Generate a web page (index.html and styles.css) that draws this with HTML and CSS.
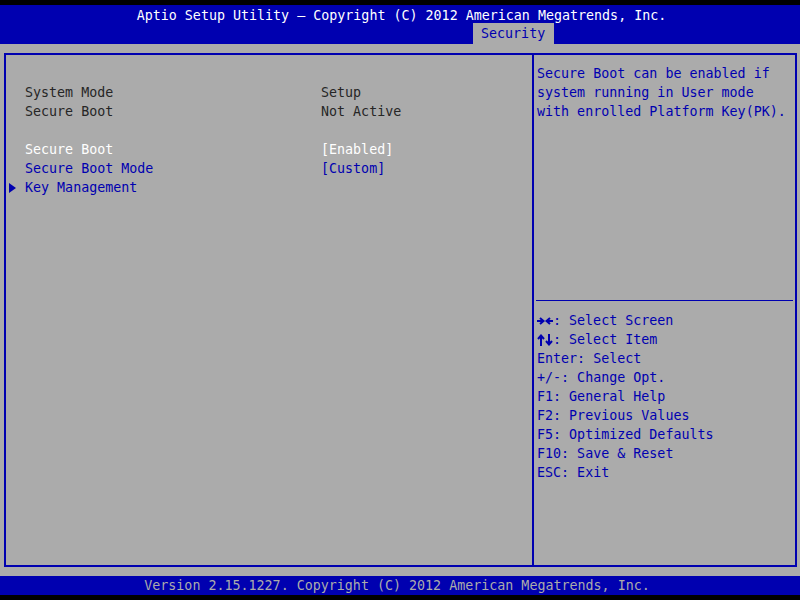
FILE: index.html
```html
<!DOCTYPE html>
<html>
<head>
  <title>Aptio Setup Utility</title>
  <link rel="stylesheet" href="styles.css">
</head>
<body>
  <div class="screen">
    <div class="header">
      <div class="title">Aptio Setup Utility – Copyright (C) 2012 American Megatrends, Inc.</div>
      <div class="tabs">
        <span class="tab">Security</span>
      </div>
    </div>

    <div class="main">
      <div class="frame">
        <div class="settings">
          <div class="row"></div>
          <div class="row"><span class="label">System Mode</span><span class="value">Setup</span></div>
          <div class="row"><span class="label">Secure Boot</span><span class="value">Not Active</span></div>
          <div class="row"></div>
          <div class="row selected"><span class="label">Secure Boot</span><span class="value">[Enabled]</span></div>
          <div class="row option"><span class="label">Secure Boot Mode</span><span class="value">[Custom]</span></div>
          <div class="row option">
            <svg class="pointer" width="8" height="10" viewBox="0 0 8 10"><polygon points="0,0 7,5 0,10" fill="#0000b0"/></svg>
            <span class="label">Key Management</span>
          </div>
        </div>

        <div class="help">
          <div class="help-text">
            <div>Secure Boot can be enabled if</div>
            <div>system running in User mode</div>
            <div>with enrolled Platform Key(PK).</div>
          </div>
          <div class="help-keys">
            <div class="key-line"><svg class="key-icon" width="16" height="12" viewBox="0 0 16 12"><path d="M0 6H6M3 3L6.5 6L3 9M16 6H10M13 3L9.5 6L13 9" stroke="#0000b0" stroke-width="2" fill="none"/></svg><span>: Select Screen</span></div>
            <div class="key-line"><svg class="key-icon" width="16" height="12" viewBox="0 0 16 12"><path d="M4 12V2M1 5L4 1.5L7 5M12 0V10M9 7L12 10.5L15 7" stroke="#0000b0" stroke-width="2" fill="none"/></svg><span>: Select Item</span></div>
            <div>Enter: Select</div>
            <div>+/-: Change Opt.</div>
            <div>F1: General Help</div>
            <div>F2: Previous Values</div>
            <div>F5: Optimized Defaults</div>
            <div>F10: Save &amp; Reset</div>
            <div>ESC: Exit</div>
          </div>
        </div>
      </div>
    </div>

    <div class="footer">Version 2.15.1227. Copyright (C) 2012 American Megatrends, Inc.</div>
  </div>
</body>
</html>
```

FILE: styles.css
```css
/* BIOS setup screen */
body {
  margin: 0;
  background-color: #000;
  font-family: "DejaVu Sans Mono", "Liberation Mono", monospace;
  font-size: 13.33px;
  line-height: 19px;
}
.screen {
  width: 800px;
  height: 600px;
  padding-top: 5px;
  box-sizing: border-box;
  display: flex;
  flex-direction: column;
}
.header {
  background-color: #0000b0;
  height: 39px;
  display: flex;
  flex-direction: column;
}
.title {
  color: #fff;
  text-align: center;
  height: 18px;
  line-height: 22px;
  padding-left: 3px;
}
.tabs {
  display: flex;
  padding-left: 473px;
}
.tab {
  background-color: #ababab;
  color: #0000b0;
  height: 21px;
  line-height: 22px;
  padding: 0 9px 0 8px;
}
.main {
  background-color: #ababab;
  height: 532px;
  padding: 9px 3px 9px 4px;
  box-sizing: border-box;
  display: flex;
}
.frame {
  flex-grow: 1;
  border: 2px solid #0000b0;
  display: flex;
}
.settings {
  width: 526px;
  padding-top: 9px;
  border-right: 2px solid #0000b0;
}
.row {
  height: 19px;
  display: flex;
  align-items: center;
  padding-left: 19px;
  position: relative;
  color: #262626;
}
.row .label {
  width: 296px;
}
.row.selected {
  color: #fff;
}
.row.option {
  color: #0000b0;
}
.pointer {
  position: absolute;
  left: 3px;
  top: 5px;
}
.help {
  flex-grow: 1;
  display: flex;
  flex-direction: column;
  color: #0000b0;
}
.help-text {
  height: 236px;
  padding-top: 9px;
  border-bottom: 1px solid #0000b0;
  margin: 0 2px;
  padding-left: 1px;
}
.help-keys {
  padding: 10px 0 0 3px;
}
.key-line {
  display: flex;
  align-items: center;
  height: 19px;
}
.key-icon {
  flex-shrink: 0;
}
.key-line span {
  white-space: pre;
}
.footer {
  background-color: #0000b0;
  color: #ababab;
  height: 19px;
  line-height: 20px;
  text-align: center;
  padding-right: 6px;
}
```
